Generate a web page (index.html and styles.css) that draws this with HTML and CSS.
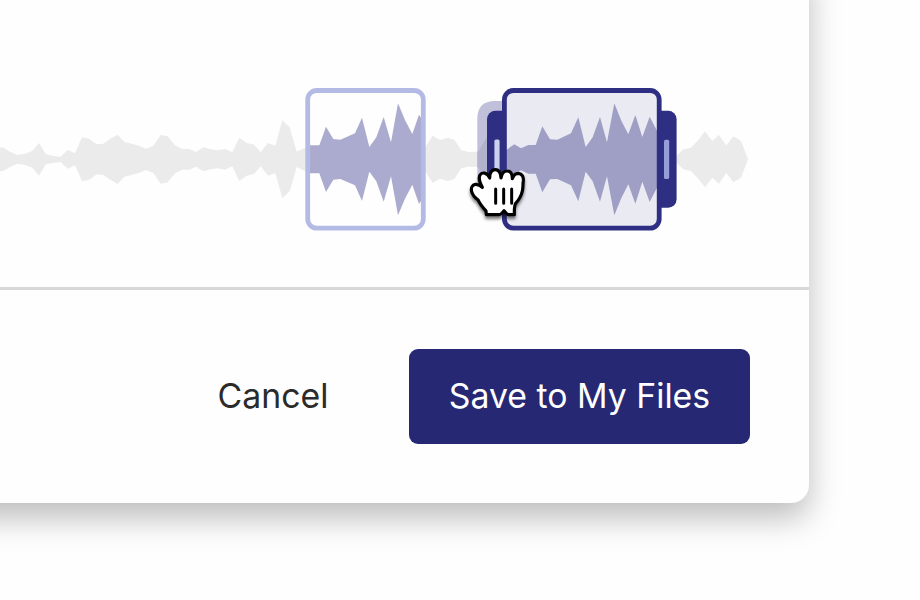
FILE: index.html
```html
<!DOCTYPE html>
<html lang="en">
<head>
<meta charset="utf-8">
<title>Trim audio</title>
<link rel="stylesheet" href="styles.css">
</head>
<body>
<main class="dialog">
  <section class="editor">
    <svg class="waveform" viewBox="0 0 809 287" aria-hidden="true">
      <defs>
        <path id="wave-start" d="M0 1V-35L8-36 30-23 52-13 75-17 97-25 117-49 138-15 160-10 182-8 203-28 225-18 246-66 267-62 290-45 310-47 333-63 353-74 373-52 395-47 418-40 438-32 460-41 482-73 503-69 525-42 547-31 568-31 588-22 610-36 632-30 653-27 675-31 697-21 718-65 740-49 762-44 782-21 804-49 826-41 847-117 869-96 890-23 922-38V1Z"/>
        <path id="wave-clip" d="M928 1V-42H958L978-98 1000-61 1021-59 1065-78 1086-125 1108-37 1129-66 1151-127 1173-51 1194-168 1216-116 1237-76 1257-134 1266-120V1Z"/>
        <path id="wave-middle" d="M1272 1V-30L1298-71 1320-58 1343-65 1363-59 1384-27 1405-22 1433-23V1Z"/>
        <path id="wave-ghost" d="M1432 1V-23L1438-28 1462-70V1Z"/>
        <path id="wave-active" d="M1515 1V-25L1543-45 1563-33 1585-43H1607L1627-99 1650-60 1672-59 1713-78 1735-126 1757-37 1778-66 1800-127 1821-51 1843-168 1864-116 1885-75 1906-133 1927-67 1949-128 1975-78V1Z"/>
        <path id="wave-end" d="M2025 1V-6L2050-30 2073-35 2095-58 2115-84 2137-55 2157-73 2179-41 2200-69 2223-55 2244 0V1Z"/>
        <filter id="hand-shadow" x="-30%" y="-30%" width="160%" height="160%">
          <feDropShadow dx="0" dy="3" stdDeviation="1.8" flood-color="#000" flood-opacity=".5"/>
        </filter>
      </defs>

      <g transform="translate(0 159.3) scale(.33333)" fill="#ebebeb">
        <use href="#wave-start"/><use href="#wave-start" transform="scale(1 -1)"/>
        <use href="#wave-middle"/><use href="#wave-middle" transform="scale(1 -1)"/>
        <use href="#wave-end"/><use href="#wave-end" transform="scale(1 -1)"/>
      </g>

      <g transform="translate(0 159.3) scale(.33333)" fill="#ababcf">
        <use href="#wave-clip"/><use href="#wave-clip" transform="scale(1 -1)"/>
      </g>
      <rect x="307.7" y="90.5" width="115.6" height="137.6" rx="9" fill="none" stroke="#b3bbe5" stroke-width="4.8"/>

      <path d="M504 101H495Q477.3 101 477.3 119V198H504Z" fill="#c0c0db"/>
      <g transform="translate(0 159.3) scale(.33333)" fill="#b2b2cd">
        <use href="#wave-ghost"/><use href="#wave-ghost" transform="scale(1 -1)"/>
      </g>
      <rect x="487" y="110.8" width="30" height="97" rx="8.5" fill="#2e2e83"/>
      <rect x="494.4" y="139.5" width="5.2" height="39.5" rx="1.6" fill="#ccd0ef"/>
      <rect x="646" y="110.8" width="30.6" height="97" rx="8.5" fill="#2e2e83"/>
      <rect x="664" y="139.7" width="5.2" height="39.4" rx="1.6" fill="#959ddb"/>

      <rect x="504.4" y="90.5" width="154.8" height="137.6" rx="9" fill="#eaeaf3"/>
      <g transform="translate(0 159.3) scale(.33333)" fill="#9f9fc5">
        <use href="#wave-active"/><use href="#wave-active" transform="scale(1 -1)"/>
      </g>
      <rect x="504.4" y="90.5" width="154.8" height="137.6" rx="9" fill="none" stroke="#2e2e83" stroke-width="4.8"/>

      <g filter="url(#hand-shadow)">
        <g transform="translate(460 150) scale(.33333)" stroke="#000" stroke-linecap="round" stroke-linejoin="round">
          <path d="M79 194 78 183C70 174 60 163 55 151 47 145 38 137 35 125 32 113 37 104 46 103 55 102 62 107 67 112 60 99 54 86 60 75 65 66 82 66 89 84 89 71 92 59 106 59 118 59 122 69 123 84 126 70 130 63 142 63 154 63 157 73 157 86 161 74 166 70 175 70 187 71 191 82 190 92 188 104 190 112 187 123 184 137 178 148 167 160 162 169 163 183 163 194H146C141 194 137 188 132 182 127 189 123 194 117 194Z" fill="#fff" stroke-width="9.5"/>
          <path d="M107 117V160M131 117V160M155 117V160" fill="none" stroke-width="9"/>
        </g>
      </g>
    </svg>
  </section>
  <footer class="actions">
    <button class="button button-cancel" type="button">Cancel</button>
    <button class="button button-save" type="button">Save to My Files</button>
  </footer>
</main>
</body>
</html>
```
FILE: styles.css
```css
* {
  box-sizing: border-box;
}

body {
  margin: 0;
  height: 600px;
  overflow: hidden;
  background: #fefefe;
  font-family: Inter, "Liberation Sans", sans-serif;
}

.dialog {
  width: 849px;
  height: 543px;
  margin: -40px 0 0 -40px;
  padding: 40px 0 0 40px;
  display: flex;
  flex-direction: column;
  background: #fefefe;
  border-radius: 18px;
  box-shadow: 0 15px 32px rgba(0, 0, 0, .26);
}

.editor {
  height: 287px;
}

.waveform {
  display: block;
  width: 809px;
  height: 287px;
}

.actions {
  flex: 1;
  display: flex;
  justify-content: flex-end;
  align-items: flex-start;
  gap: 41px;
  padding: 59px 59px 0 0;
  border-top: 3px solid #d8d8d8;
}

.button {
  height: 95px;
  border: 0;
  padding: 0 0 2px;
  font: 400 33.8px/93px Inter, "Liberation Sans", sans-serif;
  white-space: nowrap;
}

.button-cancel {
  width: 190px;
  background: none;
  color: #2b2b2b;
}

.button-save {
  width: 341px;
  background: #262873;
  border-radius: 9px;
  color: #fff;
}
```
